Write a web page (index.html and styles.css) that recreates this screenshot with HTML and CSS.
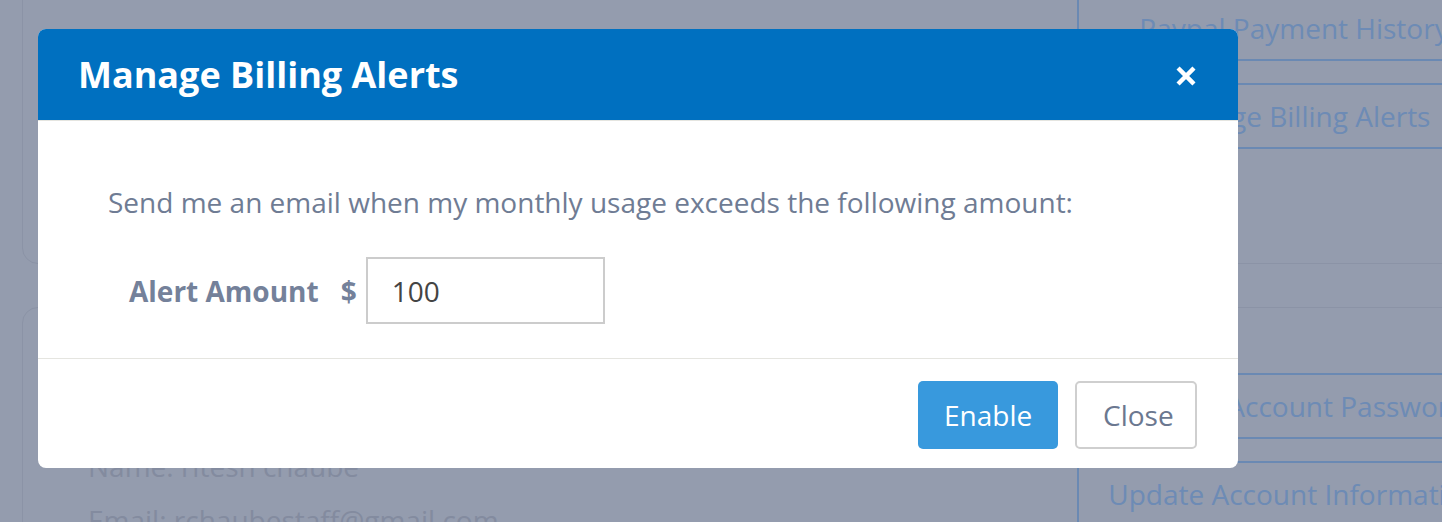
FILE: index.html
```html
<!DOCTYPE html>
<html lang="en">
<head>
    <meta charset="UTF-8">
    <meta name="viewport" content="width=device-width, initial-scale=1.0">
    <title>Account</title>
    <link rel="stylesheet" href="styles.css">
</head>
<body>
    <div class="page">
        <div class="card card-top">
            <div class="card-main"></div>
            <div class="side">
                <div class="side-item">Paypal Payment History</div>
                <div class="side-item">Manage Billing Alerts</div>
            </div>
        </div>
        <div class="card card-bottom">
            <div class="card-main">
                <p>Name: ritesh chaube</p>
                <p>Email: rchaubestaff@gmail.com</p>
            </div>
            <div class="side">
                <div class="side-item">Change Account Password</div>
                <div class="side-item">Update Account Information</div>
            </div>
        </div>
    </div>

    <div class="modal">
        <div class="modal-header">
            <div class="modal-title">Manage Billing Alerts</div>
            <button class="modal-close" aria-label="Close">
                <svg width="20" height="20" viewBox="0 0 20 20">
                    <path d="M3.6 3.6 L16.4 16.4 M16.4 3.6 L3.6 16.4" stroke="#fff" stroke-width="4.4" stroke-linecap="square" fill="none"/>
                </svg>
            </button>
        </div>
        <div class="modal-body">
            <p>Send me an email when my monthly usage exceeds the following amount:</p>
            <div class="alert-row">
                <label for="amount">Alert Amount</label>
                <span class="currency">$</span>
                <input type="text" id="amount" value="100">
            </div>
        </div>
        <div class="modal-footer">
            <button class="btn btn-primary">Enable</button>
            <button class="btn btn-default">Close</button>
        </div>
    </div>
</body>
</html>
```

FILE: styles.css
```css
html, body {
    margin: 0;
    height: 100%;
}

body {
    font-family: "Open Sans", "Noto Sans", sans-serif;
    background-color: #949cae;
    overflow: hidden;
}

/* page behind the dialog, already dimmed */
.page {
    width: 1540px;
    margin-top: -26px;
    padding-left: 22px;
}

.card {
    display: flex;
    width: 1490px;
    border: 1px solid #8b93a6;
    border-radius: 16px;
}

.card-bottom {
    margin-top: 43px;
}

.card-main {
    flex: none;
    box-sizing: border-box;
    width: 1054px;
    padding: 0 0 0 65px;
    color: #838b9f;
    font-size: 28px;
    line-height: 36px;
}

.card-bottom .card-main {
    padding-top: 140px;
}

.card-main p {
    margin: 0 0 18px;
}

.side {
    width: 430px;
    flex-shrink: 0;
    border-left: 2px solid #6a89b3;
    padding: 20px 0 114px;
}

.card-bottom .side {
    padding-top: 65px;
}

.side-item {
    box-sizing: border-box;
    height: 66px;
    display: flex;
    align-items: center;
    justify-content: center;
    border-top: 2px solid #6a89b3;
    border-bottom: 2px solid #6a89b3;
    margin-bottom: 22px;
    color: #6d8bb5;
    font-size: 28px;
    white-space: nowrap;
}

.side-item:last-child {
    margin-bottom: 0;
}

/* dialog */
.modal {
    position: absolute;
    left: 38px;
    top: 29px;
    width: 1200px;
    background-color: #fff;
    border-radius: 8px;
    overflow: hidden;
}

.modal-header {
    height: 91px;
    background-color: #0070c0;
    border-bottom: 1px solid #e5e5e0;
    padding: 0 42px 0 41px;
    display: flex;
    align-items: center;
    justify-content: space-between;
}

.modal-title {
    color: #fff;
    font-size: 36px;
    font-weight: bold;
    margin-left: -1px;
}

.modal-close {
    background: none;
    border: 0;
    padding: 0;
    width: 20px;
    height: 20px;
    display: flex;
    margin-top: 2px;
}

.modal-body {
    padding: 61px 70px 34px;
    color: #6f7c94;
    font-size: 28px;
}

.modal-body p {
    margin: 0 0 35px;
    line-height: 40px;
}

.alert-row {
    display: flex;
    align-items: center;
    padding-left: 21px;
    font-weight: bold;
    color: #74819a;
}

.currency {
    margin-left: 22px;
    margin-right: 9px;
}

.alert-row input {
    box-sizing: border-box;
    width: 239px;
    height: 67px;
    border: 2px solid #cccccc;
    outline: 0;
    padding: 0 0 0 24px;
    font-family: inherit;
    font-size: 28px;
    color: #444;
}

.modal-footer {
    border-top: 1px solid #e5e5e0;
    padding: 22px 41px 19px;
    display: flex;
    justify-content: flex-end;
    gap: 17px;
}

.btn {
    font-family: inherit;
    font-size: 28px;
    height: 68px;
    border-radius: 5px;
    padding: 0 26px;
    cursor: pointer;
}

.btn-primary {
    width: 140px;
    background-color: #3899dd;
    border: 0;
    color: #fff;
}

.btn-default {
    width: 122px;
    background-color: #fff;
    border: 2px solid #cfcfcf;
    color: #6b7890;
}
```
